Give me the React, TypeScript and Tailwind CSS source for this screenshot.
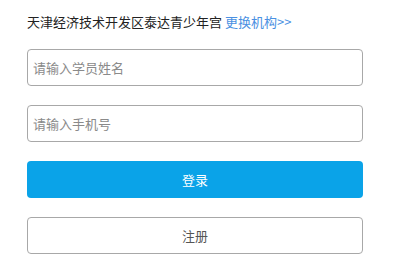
export default function App() {
  return (
    <div
      className="min-h-screen bg-white px-[27px] pt-[15px]"
      style={{ fontFamily: '"Noto Sans CJK SC", "Noto Sans", sans-serif' }}
    >
      <div className="w-[336px]">
        <p className="text-[13px] leading-[14px] text-[#222] whitespace-nowrap">
          天津经济技术开发区泰达青少年宫{" "}
          <a href="#" className="text-[#4a90e2]">
            更换机构&gt;&gt;
          </a>
        </p>
        <div className="mt-[20px] flex flex-col gap-[19px]">
          <input
            type="text"
            placeholder="请输入学员姓名"
            className="h-[37px] w-full rounded-[4px] border border-[#a8a8a8] px-[5px] text-[13px] outline-none placeholder:text-[#8a8a8a]"
          />
          <input
            type="text"
            placeholder="请输入手机号"
            className="h-[37px] w-full rounded-[4px] border border-[#a8a8a8] px-[5px] text-[13px] outline-none placeholder:text-[#8a8a8a]"
          />
          <button className="h-[37px] w-full rounded-[4px] bg-[#0aa3e8] text-[13px] text-white">
            登录
          </button>
          <button className="h-[37px] w-full rounded-[4px] border border-[#a8a8a8] bg-white text-[13px] text-[#555]">
            注册
          </button>
        </div>
      </div>
    </div>
  );
}
